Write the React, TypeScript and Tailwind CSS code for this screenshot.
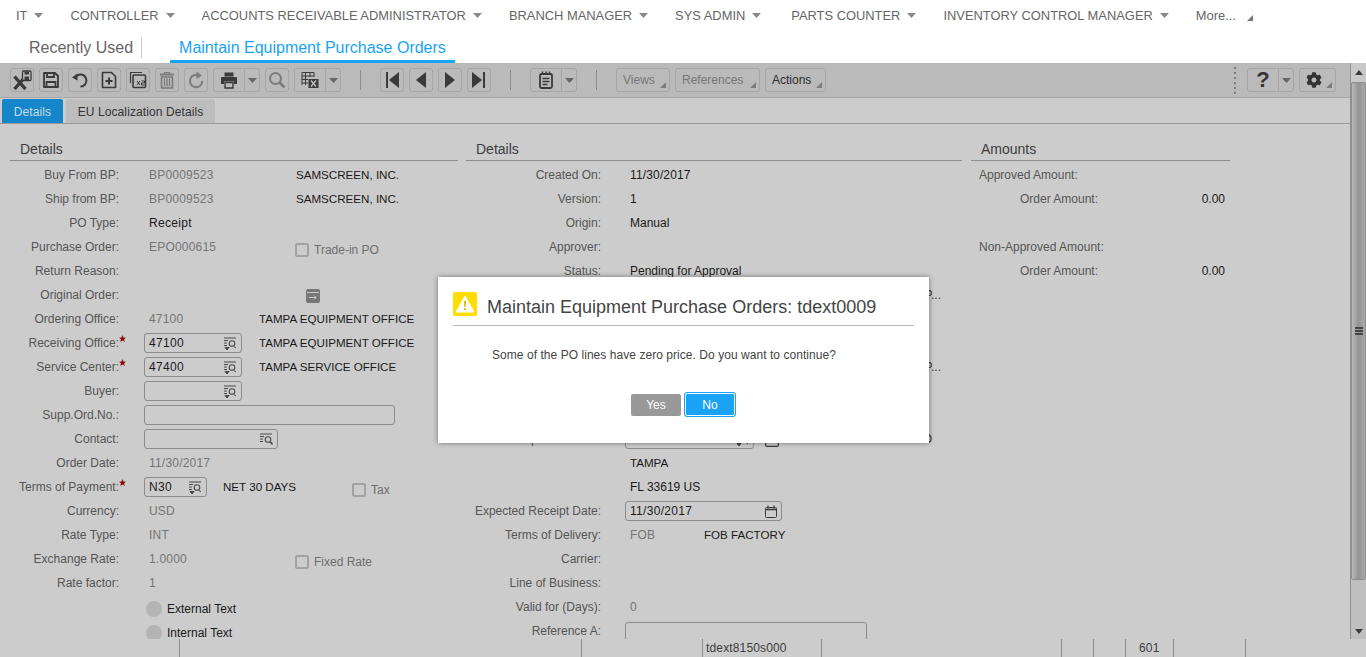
import React from "react";
import { FaCog } from "react-icons/fa";

const NAV_ITEMS = [
  "IT",
  "CONTROLLER",
  "ACCOUNTS RECEIVABLE ADMINISTRATOR",
  "BRANCH MANAGER",
  "SYS ADMIN",
  "PARTS COUNTER",
  "INVENTORY CONTROL MANAGER",
];

function Caret({ color = "#8a8a8a" }: { color?: string }) {
  return (
    <svg width="9" height="5" viewBox="0 0 9 5" className="shrink-0">
      <path d="M0 0h9L4.5 5z" fill={color} />
    </svg>
  );
}

function CornerTri({ color = "#777" }: { color?: string }) {
  return (
    <svg width="6" height="6" viewBox="0 0 6 6" className="shrink-0">
      <path d="M6 0v6H0z" fill={color} />
    </svg>
  );
}

function ToolButton({ children }: { children: React.ReactNode }) {
  return (
    <div className="flex h-[24px] w-[24px] shrink-0 items-center justify-center rounded-[3px] border border-[#a6a6a6]">
      {children}
    </div>
  );
}

function SplitButton({ children, width }: { children: React.ReactNode; width: string }) {
  return (
    <div className={`flex h-[24px] shrink-0 rounded-[3px] border border-[#a6a6a6] ${width}`}>
      <div className="flex flex-1 items-center justify-center">{children}</div>
      <div className="flex w-[15px] items-center justify-center border-l border-[#a6a6a6]">
        <Caret color="#666" />
      </div>
    </div>
  );
}

function MenuButton({ label, width, active }: { label: string; width: string; active?: boolean }) {
  return (
    <div className={`relative flex h-[24px] shrink-0 items-center rounded-[3px] border border-[#a6a6a6] pl-[6px] text-[12px] ${width} ${active ? "text-[#2c2c2c]" : "text-[#777777]"}`}>
      {label}
      <span className="absolute right-[3px] bottom-[3px] flex">
        <CornerTri color="#7d7d7d" />
      </span>
    </div>
  );
}

function ToolSep() {
  return <div className="mx-[19px] h-[20px] w-px shrink-0 bg-[#8e8e8e]" />;
}

const D = "#3a3a3a";
const G = "#7c7c7c";

function IconSaveExit() {
  return (
    <svg width="21" height="20" viewBox="0 0 21 20" fill="none">
      <path d="M2.5 6.5l11 12.5M13.5 6.5l-11 12.5" stroke={D} strokeWidth="3.4" />
      <rect x="10.5" y="1" width="8.5" height="9.5" rx="1" fill="#bababa" stroke={D} strokeWidth="1.3" />
      <rect x="12.5" y="1.5" width="4.5" height="3" fill={D} />
      <rect x="12.5" y="6.5" width="4.5" height="4" fill={D} />
    </svg>
  );
}
function IconSave() {
  return (
    <svg width="18" height="18" viewBox="0 0 18 18" fill="none" stroke={D} strokeWidth="1.8">
      <path d="M2 2h11l3 3v11H2z" strokeLinejoin="round" />
      <path d="M5 2v4h7V2M4.5 16v-5h9v5" />
    </svg>
  );
}
function IconUndo() {
  return (
    <svg width="18" height="18" viewBox="0 0 18 18" fill="none">
      <path d="M5 5.5A6 6 0 1 1 9.5 15.5" stroke={D} strokeWidth="2" />
      <path d="M1 6.5l5.5-4v7z" fill={D} />
    </svg>
  );
}
function IconNew() {
  return (
    <svg width="16" height="18" viewBox="0 0 16 18" fill="none" stroke={D} strokeWidth="1.6">
      <path d="M1.5 1.5h9l4 4v11h-13z" strokeLinejoin="round" />
      <path d="M8 6.5v7M4.5 10h7" strokeWidth="2" />
    </svg>
  );
}
function IconDuplicate() {
  return (
    <svg width="18" height="18" viewBox="0 0 18 18" fill="none" stroke={D}>
      <path d="M1.5 12V1.5H13" strokeWidth="1.2" />
      <rect x="4" y="4" width="12.5" height="12.5" rx="1" strokeWidth="1.6" />
      <path d="M8 10l3 4M11 10l-3 4M12.5 10h3v2h-3v2h3" strokeWidth="1" />
    </svg>
  );
}
function IconTrash() {
  return (
    <svg width="16" height="18" viewBox="0 0 16 18" fill="none" stroke={G}>
      <path d="M1 3.5h14" strokeWidth="2" />
      <path d="M5.5 3V1.5h5V3" strokeWidth="1.2" />
      <path d="M2.5 6h11v11h-11z" strokeWidth="1.6" />
      <path d="M5.5 7.5v8M8 7.5v8M10.5 7.5v8" strokeWidth="1.3" />
    </svg>
  );
}
function IconRedo() {
  return (
    <svg width="16" height="18" viewBox="0 0 16 18" fill="none">
      <path d="M11 4.5A6.2 6.2 0 1 0 14.3 10" stroke={G} strokeWidth="2" />
      <path d="M8.5 0.5l5.5 4-5.5 3.5z" fill={G} />
    </svg>
  );
}
function IconPrinter() {
  return (
    <svg width="18" height="18" viewBox="0 0 18 18" fill={D}>
      <path d="M4.5 1.5h9v4h-9z" />
      <path d="M1 7a1 1 0 0 1 1-1h14a1 1 0 0 1 1 1v6h-3v-2.5H4V13H1z" />
      <path d="M5 11.5h8v5.5H5z" fill="none" stroke={D} strokeWidth="1.4" />
    </svg>
  );
}
function IconSearch() {
  return (
    <svg width="18" height="18" viewBox="0 0 18 18" fill="none" stroke={G}>
      <circle cx="7.5" cy="7.5" r="5.5" strokeWidth="2" />
      <path d="M11.5 11.5l5 5" strokeWidth="2.6" />
    </svg>
  );
}
function IconExcel() {
  return (
    <svg width="18" height="18" viewBox="0 0 18 18" fill="none" stroke={D}>
      <path d="M1 1.5h12M1 5h12M1 8.5h6M1 12h6M1 1.5V14M4.5 1.5V14M9 1.5V6M13 1.5V6" strokeWidth="1" />
      <rect x="7.5" y="8" width="10" height="9" fill={D} stroke="none" />
      <path d="M10 9.5l5 6M15 9.5l-5 6" stroke="#bababa" strokeWidth="1.5" />
    </svg>
  );
}
function IconFirst() {
  return (
    <svg width="16" height="16" viewBox="0 0 16 16" fill={D}>
      <path d="M2 0h2v16H2zM15 0v16L5 8z" />
    </svg>
  );
}
function IconPrev() {
  return (
    <svg width="12" height="16" viewBox="0 0 12 16" fill={D}>
      <path d="M11 0v16L1 8z" />
    </svg>
  );
}
function IconNext() {
  return (
    <svg width="12" height="16" viewBox="0 0 12 16" fill={D}>
      <path d="M1 0v16l10-8z" />
    </svg>
  );
}
function IconLast() {
  return (
    <svg width="16" height="16" viewBox="0 0 16 16" fill={D}>
      <path d="M12 0h2v16h-2zM1 0v16l10-8z" />
    </svg>
  );
}
function IconNotes() {
  return (
    <svg width="14" height="18" viewBox="0 0 14 18" fill="none" stroke={D}>
      <rect x="1" y="3" width="12" height="14" rx="1.5" strokeWidth="1.8" />
      <path d="M3.5 0.5v3M7 0.5v3M10.5 0.5v3" strokeWidth="1.4" />
      <path d="M3.5 7.5h7M3.5 10.5h7M3.5 13.5h5" strokeWidth="1.3" />
    </svg>
  );
}
function LookupIcon({ search }: { search?: boolean }) {
  return (
    <svg width="13" height="13" viewBox="0 0 13 13" fill="none" stroke="#4a4a4a" className="shrink-0">
      <path d="M0 1h12M0 3.5h4M0 6h3M0 8.5h3" strokeWidth="1" />
      <circle cx="8" cy="6.5" r="2.8" strokeWidth="1.1" />
      {search ? (
        <path d="M10 8.5l2.5 3" strokeWidth="1.6" />
      ) : (
        <path d="M1 10.5h4L3 13zM10 9.5l2 1.5" strokeWidth="1" fill="#4a4a4a" />
      )}
    </svg>
  );
}
function CalendarIcon({ size = 12 }: { size?: number }) {
  return (
    <svg width={size} height={size + 1} viewBox="0 0 12 13" fill="none" stroke="#3c3c3c" className="shrink-0">
      <rect x="0.5" y="2.5" width="11" height="10" rx="1" />
      <path d="M0.5 4.5h11" strokeWidth="1.6" />
      <path d="M3 0.5v3M9 0.5v3" strokeWidth="1.2" />
    </svg>
  );
}
function RedStar() {
  return (
    <svg width="7" height="7" viewBox="0 0 10 10" className="absolute -top-[1px] -right-[7px]">
      <path d="M5 0l1.4 3.4L10 3.8 7.3 6.2 8.1 10 5 8 1.9 10l.8-3.8L0 3.8l3.6-.4z" fill="#8e0d0d" />
    </svg>
  );
}

function Checkbox({ label }: { label: string }) {
  return (
    <div className="flex items-center gap-[5px] pt-[6px] text-[12px] text-[#6e6e6e]">
      <div className="h-[14px] w-[14px] rounded-[2px] border-2 border-[#a2a2a2]" />
      {label}
    </div>
  );
}

function Field({ value, width, icon }: { value?: string; width: string; icon?: React.ReactNode }) {
  return (
    <div className={`flex h-[20px] shrink-0 items-center justify-between rounded-[3px] border border-[#8c8c8c] pr-[4px] pl-[4px] text-[12px] tracking-[0.3px] text-[#1c1c1c] ${width}`}>
      <span>{value}</span>
      {icon}
    </div>
  );
}

function Label({ text, width, star }: { text: string; width: string; star?: boolean }) {
  return (
    <div className={`shrink-0 text-right text-[12px] text-[#555555] ${width}`}>
      <span className="relative">
        {text}
        {star && <RedStar />}
      </span>
    </div>
  );
}

function LeftRow({ label, star, children }: { label?: string; star?: boolean; children?: React.ReactNode }) {
  return (
    <div className="flex h-[24px] items-center">
      <Label text={label ?? ""} width="w-[109px]" star={star} />
      <div className="ml-[25px] flex min-w-0 flex-1 items-center">{children}</div>
    </div>
  );
}

function MidRow({ label, children }: { label?: string; children?: React.ReactNode }) {
  return (
    <div className="flex h-[24px] items-center">
      <Label text={label ?? ""} width="w-[135px]" />
      <div className="ml-[24px] flex min-w-0 flex-1 items-center">{children}</div>
    </div>
  );
}

function Grey({ children, width }: { children?: React.ReactNode; width?: string }) {
  return <span className={`shrink-0 pl-[5px] text-[12px] tracking-[0.2px] text-[#757575] ${width ?? ""}`}>{children}</span>;
}

function Dark({ children, width }: { children?: React.ReactNode; width?: string }) {
  return <span className={`shrink-0 text-[12px] whitespace-nowrap text-[#1a1a1a] ${width ?? ""}`}>{children}</span>;
}

function OfficeName({ children, width }: { children?: React.ReactNode; width?: string }) {
  return <span className={`shrink-0 text-[11.6px] whitespace-nowrap text-[#1a1a1a] ${width ?? ""}`}>{children}</span>;
}

function SectionHead({ title, indent }: { title: string; indent: string }) {
  return (
    <div className={`flex h-[23px] items-center border-b border-[#8f8f8f] text-[14px] text-[#3d3d3d] ${indent}`}>
      {title}
    </div>
  );
}

function RadioRow({ label }: { label: string }) {
  return (
    <div className="flex h-[24px] items-center">
      <div className="ml-[136px] h-[16px] w-[16px] rounded-full bg-[#b4b4b4]" />
      <span className="ml-[5px] text-[12px] text-[#1a1a1a]">{label}</span>
    </div>
  );
}

function DetailsLeft() {
  return (
    <div className="ml-[10px] w-[448px] shrink-0">
      <SectionHead title="Details" indent="pl-[10px]" />
      <div className="mt-[2px]">
        <LeftRow label="Buy From BP:"><Grey width="w-[152px]">BP0009523</Grey><OfficeName>SAMSCREEN, INC.</OfficeName></LeftRow>
        <LeftRow label="Ship from BP:"><Grey width="w-[152px]">BP0009523</Grey><OfficeName>SAMSCREEN, INC.</OfficeName></LeftRow>
        <LeftRow label="PO Type:"><span className="pl-[5px] text-[12px] tracking-[0.3px] text-[#1a1a1a]">Receipt</span></LeftRow>
        <LeftRow label="Purchase Order:"><Grey width="w-[151px]">EPO000615</Grey><Checkbox label="Trade-in PO" /></LeftRow>
        <LeftRow label="Return Reason:" />
        <LeftRow label="Original Order:">
          <span className="mt-[1px] ml-[162px] flex h-[14px] w-[14px] items-center justify-center rounded-[2px] bg-[#777777]">
            <svg width="12" height="12" viewBox="0 0 12 12" fill="none" stroke="#cccccc">
              <path d="M0 2.5h12M2 7.5h7M7 5.5l2 2-2 2" />
            </svg>
          </span>
        </LeftRow>
        <LeftRow label="Ordering Office:"><Grey width="w-[115px]">47100</Grey><OfficeName>TAMPA EQUIPMENT OFFICE</OfficeName></LeftRow>
        <LeftRow label="Receiving Office:" star><Field value="47100" width="w-[98px]" icon={<LookupIcon />} /><OfficeName width="ml-[17px]">TAMPA EQUIPMENT OFFICE</OfficeName></LeftRow>
        <LeftRow label="Service Center:" star><Field value="47400" width="w-[98px]" icon={<LookupIcon />} /><OfficeName width="ml-[17px]">TAMPA SERVICE OFFICE</OfficeName></LeftRow>
        <LeftRow label="Buyer:"><Field width="w-[98px]" icon={<LookupIcon />} /></LeftRow>
        <LeftRow label="Supp.Ord.No.:"><Field width="w-[251px]" /></LeftRow>
        <LeftRow label="Contact:"><Field width="w-[134px]" icon={<LookupIcon search />} /></LeftRow>
        <LeftRow label="Order Date:"><Grey>11/30/2017</Grey></LeftRow>
        <LeftRow label="Terms of Payment:" star>
          <Field value="N30" width="w-[63px]" icon={<LookupIcon />} />
          <OfficeName width="ml-[16px] w-[129px]">NET 30 DAYS</OfficeName>
          <Checkbox label="Tax" />
        </LeftRow>
        <LeftRow label="Currency:"><Grey>USD</Grey></LeftRow>
        <LeftRow label="Rate Type:"><Grey>INT</Grey></LeftRow>
        <LeftRow label="Exchange Rate:"><Grey width="w-[151px]">1.0000</Grey><Checkbox label="Fixed Rate" /></LeftRow>
        <LeftRow label="Rate factor:"><Grey>1</Grey></LeftRow>
        <div className="mt-[2px]">
          <RadioRow label="External Text" />
          <RadioRow label="Internal Text" />
        </div>
      </div>
    </div>
  );
}

function DetailsMiddle() {
  return (
    <div className="ml-[8px] w-[496px] shrink-0">
      <SectionHead title="Details" indent="pl-[10px]" />
      <div className="mt-[2px]">
        <MidRow label="Created On:"><Dark width="pl-[5px] tracking-[0.15px]">11/30/2017</Dark></MidRow>
        <MidRow label="Version:"><Dark width="pl-[5px]">1</Dark></MidRow>
        <MidRow label="Origin:"><Dark width="pl-[5px]">Manual</Dark></MidRow>
        <MidRow label="Approver:" />
        <MidRow label="Status:"><Dark width="pl-[5px]">Pending for Approval</Dark></MidRow>
        <MidRow><div className="w-[316px] text-right text-[12px] text-[#333333]">P...</div></MidRow>
        <MidRow />
        <MidRow />
        <MidRow><div className="w-[316px] text-right text-[12px] text-[#333333]">P...</div></MidRow>
        <MidRow />
        <MidRow />
        <MidRow label="Ship to Address:">
          <Field width="w-[129px]" icon={<LookupIcon />} />
          <span className="ml-[11px] flex">
            <CalendarIcon size={14} />
          </span>
          <span className="w-[153px] text-right text-[12px] text-[#333333]">O</span>
        </MidRow>
        <MidRow><OfficeName width="pl-[5px]">TAMPA</OfficeName></MidRow>
        <MidRow><Dark width="pl-[5px]">FL 33619 US</Dark></MidRow>
        <MidRow label="Expected Receipt Date:">
          <Field value="11/30/2017" width="w-[157px]" icon={<CalendarIcon />} />
        </MidRow>
        <MidRow label="Terms of Delivery:"><Grey width="w-[79px]">FOB</Grey><OfficeName>FOB FACTORY</OfficeName></MidRow>
        <MidRow label="Carrier:" />
        <MidRow label="Line of Business:" />
        <MidRow label="Valid for (Days):"><Grey>0</Grey></MidRow>
        <MidRow label="Reference A:">
          <div className="mt-[5px] h-[24px] w-[242px] shrink-0 rounded-t-[3px] border border-[#8c8c8c]" />
        </MidRow>
      </div>
    </div>
  );
}

function AmountRow({ label, value }: { label: string; value?: string }) {
  if (!value) {
    return <div className="flex h-[24px] items-center pl-[8px] text-[12px] text-[#555555]">{label}</div>;
  }
  return (
    <div className="flex h-[24px] items-center justify-between pr-[5px] text-[12px]">
      <span className="w-[127px] text-right text-[#555555]">{label}</span>
      <span className="text-[#1a1a1a]">{value}</span>
    </div>
  );
}

function Amounts() {
  return (
    <div className="ml-[9px] w-[259px] shrink-0">
      <SectionHead title="Amounts" indent="pl-[10px]" />
      <div className="mt-[2px]">
        <AmountRow label="Approved Amount:" />
        <AmountRow label="Order Amount:" value="0.00" />
        <div className="h-[24px]" />
        <AmountRow label="Non-Approved Amount:" />
        <AmountRow label="Order Amount:" value="0.00" />
      </div>
    </div>
  );
}

function Scrollbar() {
  return (
    <div className="flex w-[16px] shrink-0 flex-col border-l border-[#8f8f8f] bg-[#bfbfbf]">
      <div className="flex h-[19px] shrink-0 items-center justify-center bg-[#c9c9c9]">
        <svg width="8" height="5" viewBox="0 0 8 5"><path d="M4 0l4 5H0z" fill="#3c3c3c" /></svg>
      </div>
      <div className="flex h-[498px] shrink-0 flex-col items-center justify-center gap-[1px] rounded-[2px] border border-[#8f8f8f] bg-linear-to-r from-[#b9b9b9] via-[#949494] to-[#a8a8a8]">
        <div className="h-[2px] w-[8px] bg-[#444444]" />
        <div className="h-[2px] w-[8px] bg-[#444444]" />
        <div className="h-[2px] w-[8px] bg-[#444444]" />
      </div>
      <div className="flex-1" />
      <div className="flex h-[16px] shrink-0 items-center justify-center">
        <svg width="8" height="5" viewBox="0 0 8 5"><path d="M0 0h8L4 5z" fill="#3c3c3c" /></svg>
      </div>
    </div>
  );
}

const STATUS_CELLS = [
  { width: "w-[180px]", text: "" },
  { width: "w-[402px]", text: "" },
  { width: "w-[121px]", text: "" },
  { width: "w-[119px]", text: "tdext8150s000" },
  { width: "w-[240px]", text: "" },
  { width: "w-[32px]", text: "" },
  { width: "w-[32px]", text: "" },
  { width: "w-[48px]", text: "601" },
  { width: "w-[72px]", text: "" },
];

function MessageDialog() {
  return (
    <div className="absolute top-[277px] left-[438px] h-[166px] w-[491px] bg-white px-[15px] pt-[15px] shadow-[0_0_5px_rgba(0,0,0,0.45)]">
      <div className="flex h-[34px] items-start border-b border-[#b9b9b9]">
        <span className="flex h-[24px] w-[24px] items-center justify-center rounded-[2px] bg-[#ffdd00]">
          <svg width="20" height="18" viewBox="0 0 20 18">
            <path d="M10 1l9 16H1z" fill="#ffffff" stroke="#ffffff" strokeLinejoin="round" />
            <path d="M9 6h2l-.3 6H9.3zM9 13.2h2V15H9z" fill="#e0b800" />
          </svg>
        </span>
        <span className="ml-[10px] text-[18px] leading-[30px] text-[#444444]">
          Maintain Equipment Purchase Orders: tdext0009
        </span>
      </div>
      <div className="mt-[21px] pl-[39px] text-[12px] leading-[16px] tracking-[0.05px] text-[#444444]">
        Some of the PO lines have zero price. Do you want to continue?
      </div>
      <div className="mt-[29px] ml-[178px] flex items-center gap-[3px]">
        <div className="flex h-[22px] w-[50px] items-center justify-center rounded-[2px] bg-[#999999] text-[12px] text-white">
          Yes
        </div>
        <div className="flex h-[25px] w-[52px] items-center justify-center rounded-[3px] border border-[#1aa3f5] bg-[#1aa3f5] text-[12px] text-white outline outline-1 -outline-offset-2 outline-white">
          No
        </div>
      </div>
    </div>
  );
}

export default function App() {
  return (
    <div className="relative flex h-[657px] w-[1366px] flex-col overflow-hidden bg-white font-['Liberation_Sans',Arial,sans-serif]">
      {/* top menu */}
      <div className="h-[63px] shrink-0">
        <div className="flex h-[32px] items-center pl-[16px] text-[12.9px] text-[#666666]">
          {NAV_ITEMS.map((item) => (
            <div key={item} className={`flex items-center gap-[7px] ${item === "SYS ADMIN" ? "mr-[30px]" : "mr-[27px]"}`}>
              <span className="whitespace-nowrap">{item}</span>
              <Caret />
            </div>
          ))}
          <span>More...</span>
          <span className="ml-[11px] flex pt-[4px]">
            <CornerTri color="#777" />
          </span>
        </div>
        <div className="flex h-[31px] items-start pt-[5px] text-[16px]">
          <span className="ml-[29px] border-r border-[#cccccc] pr-[8px] leading-[21px] text-[#666666]">Recently Used</span>
          <span className="ml-[28px] h-[26px] border-b-[3px] border-[#1aa3f5] px-[9px] leading-[21px] text-[#1aa3f5]">
            Maintain Equipment Purchase Orders
          </span>
        </div>
      </div>

      <div className="flex min-h-0 flex-1">
        <div className="flex min-w-0 flex-1 flex-col bg-[#cccccc]">
          {/* toolbar */}
          <div className="flex h-[35px] shrink-0 items-center border-b border-[#a6a6a6] bg-[#bababa] pr-[14px] pl-[10px]">
            <div className="flex gap-[5px]">
              <ToolButton><IconSaveExit /></ToolButton>
              <ToolButton><IconSave /></ToolButton>
              <ToolButton><IconUndo /></ToolButton>
              <ToolButton><IconNew /></ToolButton>
              <ToolButton><IconDuplicate /></ToolButton>
              <ToolButton><IconTrash /></ToolButton>
              <ToolButton><IconRedo /></ToolButton>
              <SplitButton width="w-[47px]"><IconPrinter /></SplitButton>
              <ToolButton><IconSearch /></ToolButton>
              <SplitButton width="w-[47px]"><IconExcel /></SplitButton>
            </div>
            <ToolSep />
            <div className="flex gap-[5px]">
              <ToolButton><IconFirst /></ToolButton>
              <ToolButton><IconPrev /></ToolButton>
              <ToolButton><IconNext /></ToolButton>
              <ToolButton><IconLast /></ToolButton>
            </div>
            <ToolSep />
            <SplitButton width="w-[47px]"><IconNotes /></SplitButton>
            <ToolSep />
            <div className="flex gap-[5px]">
              <MenuButton label="Views" width="w-[54px]" />
              <MenuButton label="References" width="w-[85px]" />
              <MenuButton label="Actions" width="w-[61px]" active />
            </div>
            <div className="ml-auto flex items-center">
              <div className="mr-[11px] flex flex-col gap-[3px]">
                {[0, 1, 2, 3, 4, 5].map((i) => (
                  <div key={i} className="h-[2px] w-[2px] bg-[#7d7d7d]" />
                ))}
              </div>
              <SplitButton width="w-[47px]">
                <span className="text-[22px] leading-none font-bold text-[#333333]">?</span>
              </SplitButton>
              <div className="relative ml-[5px] flex h-[24px] w-[37px] items-center rounded-[3px] border border-[#a6a6a6] pl-[6px]">
                <FaCog size={16} color="#333333" />
                <span className="absolute right-[3px] bottom-[3px] flex">
                  <CornerTri color="#7d7d7d" />
                </span>
              </div>
            </div>
          </div>

          {/* tabs */}
          <div className="flex h-[26px] shrink-0 items-end gap-[3px] border-b border-[#989898] pl-[2px] text-[12px] tracking-[0.1px]">
            <div className="flex h-[24px] w-[61px] items-center justify-center rounded-t-[2px] bg-[#1486c9] pt-[1px] text-[#c9dbe6]">Details</div>
            <div className="flex h-[24px] w-[149px] items-center justify-center rounded-t-[2px] bg-[#bdbdbd] pt-[1px] text-[#333333]">EU Localization Details</div>
          </div>

          {/* form */}
          <div className="flex min-h-0 flex-1 overflow-hidden pt-[14px]">
            <DetailsLeft />
            <DetailsMiddle />
            <Amounts />
          </div>
        </div>
        <Scrollbar />
      </div>

      {/* status bar */}
      <div className="flex h-[18px] shrink-0 bg-[#cccccc] text-[12px] tracking-[0.15px] text-[#3c3c3c]">
        {STATUS_CELLS.map((cell, i) => (
          <div
            key={i}
            className={`flex shrink-0 items-center border-r border-[#8f8f8f] ${cell.width} ${cell.text === "601" ? "pl-[13px]" : "pl-[3px]"}`}
          >
            {cell.text}
          </div>
        ))}
      </div>

      <MessageDialog />
    </div>
  );
}
